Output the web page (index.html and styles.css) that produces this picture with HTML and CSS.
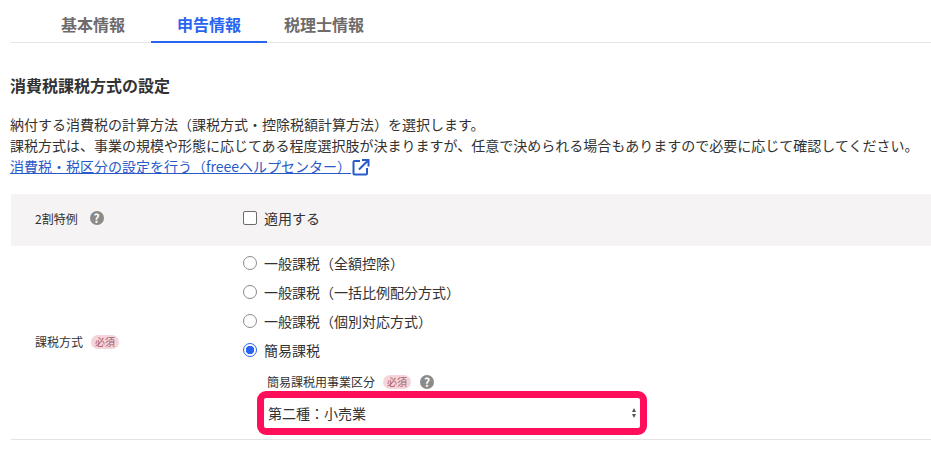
FILE: index.html
```html
<!DOCTYPE html>
<html lang="ja">
<head>
  <meta charset="UTF-8" />
  <title>申告情報</title>
  <link rel="stylesheet" href="styles.css">
</head>
<body>
  <nav class="tabs">
    <a class="tab">基本情報</a>
    <a class="tab active">申告情報</a>
    <a class="tab last">税理士情報</a>
  </nav>

  <h2 class="title">消費税課税方式の設定</h2>
  <p class="desc">納付する消費税の計算方法（課税方式・控除税額計算方法）を選択します。<br>課税方式は、事業の規模や形態に応じてある程度選択肢が決まりますが、任意で決められる場合もありますので必要に応じて確認してください。</p>
  <p class="desc help-link">
    <a class="link">消費税・税区分の設定を行う（freeeヘルプセンター）</a>
    <svg class="ext" viewBox="0 0 18 18" width="18" height="18">
      <path d="M8 3H2.500A1 1 0 0 0 1.500 4v11.500a1 1 0 0 0 1 1H14a1 1 0 0 0 1-1V10" fill="none" stroke="#285ac8" stroke-width="2"/>
      <path d="M7 11.500 15.500 3M10 2h6.500v6.500" fill="none" stroke="#285ac8" stroke-width="2"/>
    </svg>
  </p>

  <div class="row shaded">
    <div class="row-label">2割特例 <span class="help">?</span></div>
    <div class="row-body">
      <label class="option"><span class="check"></span>適用する</label>
    </div>
  </div>

  <div class="row method">
    <div class="row-label">課税方式 <span class="required">必須</span></div>
    <div class="row-body">
      <label class="option"><span class="radio"></span>一般課税（全額控除）</label>
      <label class="option"><span class="radio"></span>一般課税（一括比例配分方式）</label>
      <label class="option"><span class="radio"></span>一般課税（個別対応方式）</label>
      <label class="option"><span class="radio on"></span>簡易課税</label>
      <div class="sub">
        <div class="sub-label">簡易課税用事業区分 <span class="required">必須</span> <span class="help">?</span></div>
        <div class="select">
          <span>第二種：小売業</span>
          <svg class="arrows" viewBox="0 0 4 10" width="4" height="10">
            <path d="M2 0 4 4H0zM2 10 0 6h4z" fill="#555"/>
          </svg>
        </div>
      </div>
    </div>
  </div>
</body>
</html>
```

FILE: styles.css
```css
body {
  margin: 0;
  padding: 0 0 0 11px;
  font-family: "Noto Sans CJK JP", "Noto Sans", sans-serif;
  font-size: 14px;
  color: #323232;
  background: #fff;
  overflow: hidden;
}
.tabs {
  display: flex;
  height: 43px;
  padding-left: 24px;
  border-bottom: 1px solid #e5e3e3;
  box-sizing: border-box;
}
.tab {
  padding: 0 26px;
  font-size: 16px;
  font-weight: 700;
  line-height: 49px;
  height: 43px;
  color: #6e6b6b;
  box-sizing: border-box;
}
.tab.active {
  color: #2864f0;
  border-bottom: 2px solid #2864f0;
}
.tab.last {
  padding: 0 17px;
}
.title {
  margin: 30px 0 0 -1px;
  font-size: 16px;
  line-height: 24px;
  font-weight: 700;
}
.desc {
  margin: 0 0 0 -1px;
  line-height: 21px;
}
.title + .desc {
  margin-top: 17px;
}
.help-link {
  display: flex;
  align-items: center;
  height: 21px;
}
.link {
  color: #285ac8;
  text-decoration: underline;
}
.ext {
  margin-left: 1px;
}
.row {
  display: flex;
  align-items: center;
}
.shaded {
  margin-top: 17px;
  height: 52px;
  padding-bottom: 4px;
  box-sizing: border-box;
  background: #f5f3f3;
}
.method {
  height: 193px;
  border-bottom: 1px solid #e5e3e3;
}
.row-label {
  width: 208px;
  padding-left: 24px;
  flex-shrink: 0;
  font-size: 12px;
  display: flex;
  align-items: center;
  gap: 4px;
}
.method > .row-label {
  padding-bottom: 2px;
}
.row-body {
  flex: 1;
}
.method > .row-body {
  align-self: flex-start;
  padding-top: 2px;
}
.option {
  display: flex;
  align-items: center;
  height: 29px;
  gap: 7px;
}
.check {
  width: 12px;
  height: 12px;
  border: 1px solid #6e6b6b;
  border-radius: 2px;
  background: #fff;
}
.radio {
  width: 12px;
  height: 12px;
  border: 1px solid #8c8989;
  border-radius: 50%;
  background: #fff;
}
.radio.on {
  border-color: #2864f0;
  background: radial-gradient(circle, #2864f0 0 4px, #fff 4.500px);
}
.help {
  display: inline-flex;
  align-items: center;
  justify-content: center;
  width: 14px;
  height: 14px;
  margin-left: 8px;
  border-radius: 50%;
  background: #8c8989;
  color: #fff;
  font-size: 12px;
  font-weight: 700;
  line-height: 1;
}
.required {
  display: inline-flex;
  align-items: center;
  justify-content: center;
  width: 28px;
  height: 14px;
  margin-left: 4px;
  border-radius: 7px;
  background: #f5d5d9;
  color: #a85a65;
  font-size: 10px;
  line-height: 1;
}
.sub {
  padding-left: 14px;
  margin-top: 3px;
}
.sub-label {
  display: flex;
  align-items: center;
  gap: 4px;
  height: 29px;
  padding-left: 10px;
  font-size: 12px;
}
.sub-label .help {
  margin-left: 5px;
}
.select {
  display: flex;
  align-items: center;
  justify-content: space-between;
  width: 390px;
  height: 44px;
  margin-top: -5px;
  padding: 0 4px;
  border: 7px solid #ff0f5a;
  border-radius: 9px;
  box-sizing: border-box;
}
```
